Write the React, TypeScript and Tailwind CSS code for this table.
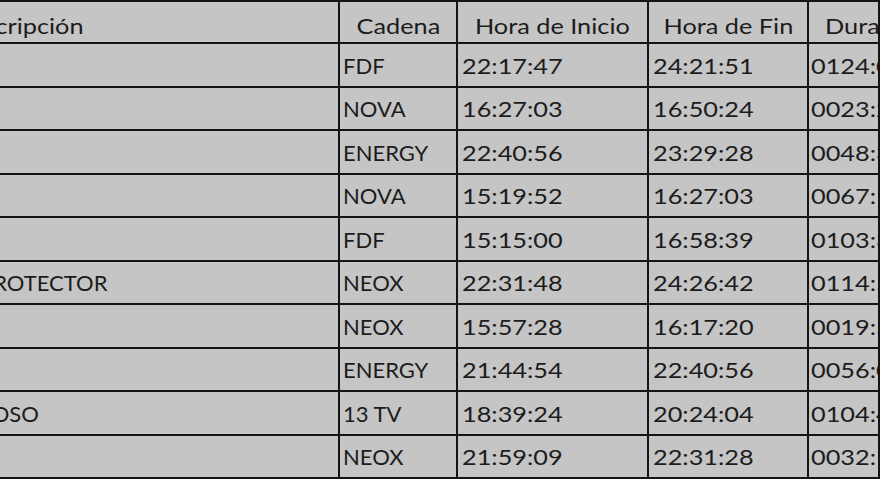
import React from "react";

const rows = [
  { desc: "", canal: "FDF", inicio: "22:17:47", fin: "24:21:51", dur: "0124:04" },
  { desc: "", canal: "NOVA", inicio: "16:27:03", fin: "16:50:24", dur: "0023:21" },
  { desc: "", canal: "ENERGY", inicio: "22:40:56", fin: "23:29:28", dur: "0048:32" },
  { desc: "", canal: "NOVA", inicio: "15:19:52", fin: "16:27:03", dur: "0067:11" },
  { desc: "", canal: "FDF", inicio: "15:15:00", fin: "16:58:39", dur: "0103:39" },
  { desc: "PROTECTOR", cut: "-ml-[20px]", canal: "NEOX", inicio: "22:31:48", fin: "24:26:42", dur: "0114:54" },
  { desc: "", canal: "NEOX", inicio: "15:57:28", fin: "16:17:20", dur: "0019:52" },
  { desc: "", canal: "ENERGY", inicio: "21:44:54", fin: "22:40:56", dur: "0056:02" },
  { desc: "GROSO", cut: "-ml-[38px]", canal: "13 TV", inicio: "18:39:24", fin: "20:24:04", dur: "0104:40" },
  { desc: "", canal: "NEOX", inicio: "21:59:09", fin: "22:31:28", dur: "0032:19" },
];

const cols = "grid grid-cols-[340px_118px_191px_160px_1fr]";
const cell = "border-r-2 border-b-2 border-[#141414] overflow-hidden whitespace-nowrap flex items-center";
// digits and lower-case run wider than the capitals in the shot
const txt = "inline-block scale-x-[1.15] origin-left";
const caps = "inline-block";
const hdr = "inline-block scale-x-[1.15] origin-center";

export default function App() {
  return (
    <div className="w-[880px] h-[495px] bg-white overflow-hidden text-[#1c1c1c] text-[22px] leading-none" style={{ fontFamily: "Lato, 'Noto Sans', sans-serif" }}>
      <div className="border-t-2 border-[#141414] bg-[#c5c5c5]">
        <div className={`${cols} h-[42px]`}>
          <div className={`${cell} pt-[8px]`}>
            <span className={`${txt} -ml-[48px]`}>Descripción</span>
          </div>
          <div className={`${cell} justify-center pt-[8px]`}><span className={hdr}>Cadena</span></div>
          <div className={`${cell} justify-center pt-[8px]`}><span className={hdr}>Hora de Inicio</span></div>
          <div className={`${cell} justify-center pt-[8px]`}><span className={hdr}>Hora de Fin</span></div>
          <div className={`${cell} pt-[8px] pl-[16px] border-r-0`}><span className={txt}>Duración</span></div>
        </div>
        {rows.map((r, i) => (
          <div key={i} className={`${cols} h-[43.5px]`}>
            <div className={`${cell} pt-[2px]`}>
              {r.desc ? <span className={`${caps} ${r.cut}`}>{r.desc}</span> : null}
            </div>
            <div className={`${cell} pt-[2px] pl-[3px]`}><span className={caps}>{r.canal}</span></div>
            <div className={`${cell} pt-[2px] pl-[4px]`}><span className={txt}>{r.inicio}</span></div>
            <div className={`${cell} pt-[2px] pl-[4px]`}><span className={txt}>{r.fin}</span></div>
            <div className={`${cell} pt-[2px] pl-[2px] border-r-0`}><span className={txt}>{r.dur}</span></div>
          </div>
        ))}
      </div>
    </div>
  );
}
